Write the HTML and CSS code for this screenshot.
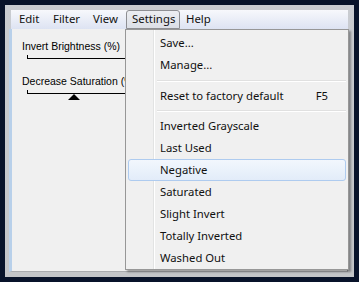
FILE: index.html
```html
<!DOCTYPE html>
<html lang="en">
<head>
    <meta charset="UTF-8">
    <title>Settings menu</title>
    <link rel="stylesheet" href="styles.css">
</head>
<body>
    <div class="window">
        <div class="menubar">
            <span class="top-item edit">Edit</span>
            <span class="top-item filter">Filter</span>
            <span class="top-item view">View</span>
            <span class="top-item settings open">Settings</span>
            <span class="top-item help">Help</span>
        </div>
        <div class="client">
            <div class="label first">Invert Brightness (%)</div>
            <div class="slider"></div>
            <div class="label">Decrease Saturation (%)</div>
            <div class="slider"></div>
            <div class="thumb"></div>
        </div>

        <!-- dropdown of Settings -->
        <ul class="dropdown">
            <li>Save...</li>
            <li>Manage...</li>
            <li class="sep sep-a"></li>
            <li class="with-key"><span>Reset to factory default</span><span class="key">F5</span></li>
            <li class="sep sep-b"></li>
            <li>Inverted Grayscale</li>
            <li>Last Used</li>
            <li class="hover">Negative</li>
            <li>Saturated</li>
            <li>Slight Invert</li>
            <li>Totally Inverted</li>
            <li>Washed Out</li>
        </ul>
    </div>
</body>
</html>
```

FILE: styles.css
```css
* {
    margin: 0;
    padding: 0;
    box-sizing: border-box;
}

body {
    width: 359px;
    height: 282px;
    background-color: #08132a;
    padding: 5px;
    overflow: hidden;
}

.window {
    position: relative;
    width: 349px;
    height: 272px;
    background: linear-gradient(#c9ccd1, #c3c5c8);
    padding: 5px 6px 5px 4px;
    display: flex;
    flex-direction: column;
}

.menubar {
    height: 19px;
    margin-left: 2px;
    display: flex;
    align-items: stretch;
    padding-left: 1px;
    background: linear-gradient(#f7f8fc, #dde3f2);
    font: 11.4px "Noto Sans", sans-serif;
    color: #111;
}

.top-item {
    line-height: 18px;
    padding-left: 7px;
}

.edit { width: 34px; }
.filter { width: 40px; }
.view { width: 39px; }

.settings {
    width: 54px;
    margin-left: 1px;
    padding-left: 5px;
    line-height: 16px;
    border: 1px solid #8e8f93;
    border-radius: 3px 3px 0 0;
    background: linear-gradient(#eceef2, #dcdfe6);
}

.help {
    padding-left: 6px;
}

.client {
    flex: 1;
    background-color: #f0f0f0;
    border-left: 3px solid #b8d0ea;
    border-right: 1px solid #9c9ea2;
    border-bottom: 1px solid #a9abae;
    padding: 11px 0 0 10px;
    font: 10.5px "Liberation Sans", Arial, sans-serif;
    color: #000;
    overflow: hidden;
}

.label {
    line-height: 13px;
    white-space: nowrap;
    margin-top: 16px;
}

.label.first {
    margin-top: 0;
}

.slider {
    margin: 2px 0 0 5px;
    width: 220px;
    height: 4px;
    border-left: 1px solid #000;
    border-bottom: 1px solid #000;
}

.thumb {
    margin-left: 46px;
    width: 0;
    height: 0;
    border-left: 6px solid transparent;
    border-right: 6px solid transparent;
    border-bottom: 6px solid #000;
}

/* dropdown menu */
.dropdown {
    position: absolute;
    left: 120px;
    top: 24px;
    width: 224px;
    height: 241px;
    list-style: none;
    padding: 2px;
    border: 1px solid #979797;
    background:
        linear-gradient(to right, transparent 27px, #e2e3e3 27px, #e2e3e3 28px, #fff 28px, #fff 29px, transparent 29px),
        #f0f0f0;
    box-shadow: 2px 2px 2px rgba(0, 0, 0, 0.35);
    font: 11.3px "Noto Sans", sans-serif;
    color: #111;
}

.dropdown li {
    height: 22px;
    line-height: 21px;
    padding-left: 32px;
    white-space: nowrap;
}

.dropdown li.with-key {
    display: flex;
    justify-content: space-between;
    padding-right: 18px;
}

.dropdown li.sep {
    height: 9px;
    margin-left: 29px;
    padding: 0;
    background: linear-gradient(transparent 4px, #e0e0e0 4px, #e0e0e0 5px, #fff 5px, #fff 6px, transparent 6px);
}

.dropdown li.sep-b {
    height: 8px;
    background: linear-gradient(transparent 3px, #e0e0e0 3px, #e0e0e0 4px, #fff 4px, #fff 5px, transparent 5px);
}

.dropdown li.hover {
    border: 1px solid #aecbef;
    border-radius: 3px;
    background: linear-gradient(#f2f7fd, #e2ecf9);
    padding-left: 31px;
    line-height: 19px;
}
```
